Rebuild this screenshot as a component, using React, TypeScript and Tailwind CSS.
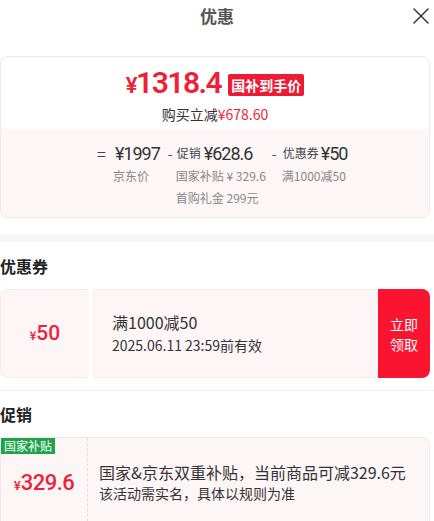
import { X } from "lucide-react";

const cjk = { fontFamily: '"Noto Sans CJK SC", "Noto Sans", sans-serif' };
const num = { fontFamily: 'Roboto, "Noto Sans CJK SC", sans-serif' };

function Amount({ children }: { children: string }) {
  return (
    <span className="text-[18px] tracking-[-1px] text-[#333]" style={num}>
      {children}
    </span>
  );
}

function PriceSummary() {
  return (
    <div className="mt-[24px] w-[430px] rounded-lg border border-[#f3e7e9]">
      <div className="flex h-[72px] flex-col items-center pt-[8px]">
        <div className="flex items-center">
          <span className="text-[30px] font-semibold leading-[36px] tracking-[-1.5px] text-[#ef1f37]" style={num}>
            <span className="text-[22px]">¥</span>1318.4
          </span>
          <span className="ml-[7px] rounded-[2px] bg-[#ee1b34] px-[3px] text-[14px] font-bold leading-[22px] text-white">
            国补到手价
          </span>
        </div>
        <div className="text-[14px] leading-[20px] text-[#333]">
          购买立减<span className="text-[#ef1f37]">¥678.60</span>
        </div>
      </div>
      <div className="flex h-[88px] rounded-b-lg bg-[#fdf6f7] pl-[96px] pt-[12px] text-[#444]">
        <div className="flex flex-col">
          <div className="flex h-[24px] items-center">
            <span className="text-[16px]">=</span>
            <span className="ml-[9px]">
              <Amount>¥1997</Amount>
            </span>
          </div>
          <div className="ml-[16px] text-[12px] leading-[22px] text-[#888]">京东价</div>
        </div>
        <div className="ml-[8px] flex flex-col">
          <div className="flex h-[24px] items-center">
            <span className="text-[14px]">-</span>
            <span className="ml-[4px] text-[12px]">促销</span>
            <span className="ml-[3px]">
              <Amount>¥628.6</Amount>
            </span>
          </div>
          <div className="ml-[8px] text-[12px] leading-[22px] text-[#888]">国家补贴 ¥ 329.6</div>
          <div className="ml-[8px] text-[12px] leading-[22px] text-[#888]">首购礼金 299元</div>
        </div>
        <div className="ml-[6px] flex flex-col">
          <div className="flex h-[24px] items-center">
            <span className="text-[14px]">-</span>
            <span className="ml-[6px] text-[12px]">优惠券</span>
            <span className="ml-[2px]">
              <Amount>¥50</Amount>
            </span>
          </div>
          <div className="ml-[10px] text-[12px] leading-[22px] text-[#888]">满1000减50</div>
        </div>
      </div>
    </div>
  );
}

function Coupon() {
  return (
    <div className="flex h-[89px] w-[430px]">
      <div className="flex w-[89px] items-center justify-center rounded-l-lg border border-r-0 border-[#f6ecee] bg-[#fdf5f6] text-[#ef1f37]">
        <span className="mt-[4px] text-[11px] font-bold">¥</span>
        <span className="text-[21px] font-medium" style={num}>50</span>
      </div>
      <div className="relative w-[4px]">
        <div className="absolute -top-[3px] left-[-1px] h-[6px] w-[6px] rounded-full bg-white" />
        <div className="absolute -bottom-[3px] left-[-1px] h-[6px] w-[6px] rounded-full bg-white" />
      </div>
      <div className="flex flex-1 flex-col justify-center border border-r-0 border-[#f6ecee] bg-[#fdf5f6] pl-[18px] text-[#333]">
        <div className="text-[16px] leading-[23px]">满1000减50</div>
        <div className="text-[14px] leading-[23px]">2025.06.11 23:59前有效</div>
      </div>
      <div className="flex w-[52px] items-center justify-center rounded-r-lg bg-[#fb1430] text-center text-[14px] leading-[20px] text-white">
        立即
        <br />
        领取
      </div>
    </div>
  );
}

function Promotion() {
  return (
    <div className="flex h-[100px] w-[430px] rounded-t-lg border border-b-0 border-[#f3e7e9] bg-[#fdf6f6]">
      <div className="relative w-[87px] border-r border-dashed border-[#eadada]">
        <div className="absolute left-0 top-0 bg-[#1ea54c] px-[3px] text-[12px] leading-[16px] text-white">国家补贴</div>
        <div className="mt-[28px] flex items-baseline justify-center text-[#ef1f37]">
          <span className="text-[12px] font-bold">¥</span>
          <span className="text-[22px] font-medium tracking-[-0.5px]" style={num}>329.6</span>
        </div>
      </div>
      <div className="pl-[11px] pt-[23px] text-[#333]">
        <div className="text-[16px] leading-[22px]">国家&京东双重补贴，当前商品可减329.6元</div>
        <div className="text-[14px] leading-[20px]">该活动需实名，具体以规则为准</div>
      </div>
    </div>
  );
}

export default function App() {
  return (
    <div className="h-[521px] w-[434px] overflow-hidden bg-white" style={cjk}>
      <div className="relative flex h-[32px] items-center justify-center">
        <span className="text-[17px] font-bold text-[#555]">优惠</span>
        <X className="absolute right-[-1px] top-[2px] h-[28px] w-[28px] text-[#333]" strokeWidth={1.2} />
      </div>
      <PriceSummary />
      <div className="mt-[16px] h-[8px] bg-[#f6f6f9]" />
      <div className="flex h-[47px] items-center text-[16px] font-bold text-[#222]">优惠券</div>
      <Coupon />
      <div className="mt-[12px] h-px bg-[#f0f0f0]" />
      <div className="flex h-[46px] items-center text-[16px] font-bold text-[#222]">促销</div>
      <Promotion />
    </div>
  );
}
